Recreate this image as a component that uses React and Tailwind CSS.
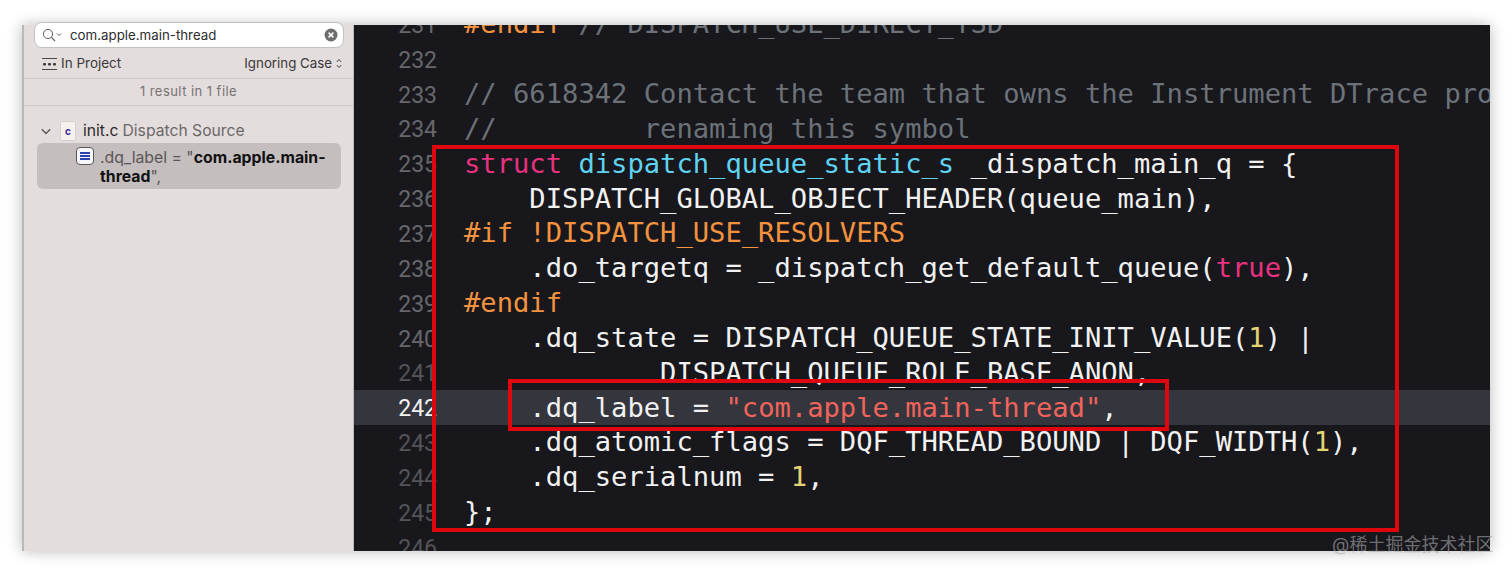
const P = "text-[#e8327f]", B = "text-[#5fd3ef]", O = "text-[#f3923f]", C = "text-[#6c7278]", S = "text-[#f0645c]", N = "text-[#e3d375]";

const lines = [
  [231, [["#endif", O], [" // DISPATCH_USE_DIRECT_TSD", C]]],
  [232, []],
  [233, [["// 6618342 Contact the team that owns the Instrument DTrace probe before", C]]],
  [234, [["//         renaming this symbol", C]]],
  [235, [["struct", P], [" "], ["dispatch_queue_static_s", B], [" _dispatch_main_q = {"]]],
  [236, [["    DISPATCH_GLOBAL_OBJECT_HEADER(queue_main),"]]],
  [237, [["#if !DISPATCH_USE_RESOLVERS", O]]],
  [238, [["    .do_targetq = _dispatch_get_default_queue("], ["true", P], ["),"]]],
  [239, [["#endif", O]]],
  [240, [["    .dq_state = DISPATCH_QUEUE_STATE_INIT_VALUE("], ["1", N], [") |"]]],
  [241, [["            DISPATCH_QUEUE_ROLE_BASE_ANON,"]]],
  [242, [["    .dq_label = "], ['"com.apple.main-thread"', S], [","]]],
  [243, [["    .dq_atomic_flags = DQF_THREAD_BOUND | DQF_WIDTH("], ["1", N], ["),"]]],
  [244, [["    .dq_serialnum = "], ["1", N], [","]]],
  [245, [["};"]]],
  [246, []],
];

function SearchIcon() {
  return (
    <svg width="20" height="14" viewBox="0 0 20 14" fill="none" stroke="#5f5c5d">
      <circle cx="6" cy="6" r="4.6" strokeWidth="1" />
      <path d="M9.4 9.4 13 13" strokeWidth="1.1" />
      <path d="M15 5.5l2 2 2-2" strokeWidth="1" />
    </svg>
  );
}

function ClearIcon() {
  return (
    <svg width="14" height="14" viewBox="0 0 14 14">
      <circle cx="7" cy="7" r="6.5" fill="#6f6c6d" />
      <path d="M4.6 4.6l4.8 4.8M9.4 4.6l-4.8 4.8" stroke="#fff" strokeWidth="1.5" />
    </svg>
  );
}

function ScopeIcon() {
  return (
    <svg width="16" height="14" viewBox="0 0 16 14" fill="#3a3839">
      <rect x="0" y="1" width="15" height="1" fill="#4a4849" />
      <rect x="0" y="12" width="15" height="1" fill="#4a4849" />
      <rect x="1" y="6" width="3" height="2.4" rx="1" />
      <rect x="6" y="6" width="3" height="2.4" rx="1" />
      <rect x="11" y="6" width="3" height="2.4" rx="1" />
    </svg>
  );
}

function UpDownIcon() {
  return (
    <svg width="6" height="11" viewBox="0 0 6 11" fill="none" stroke="#4a4849" strokeWidth="1">
      <path d="M.8 4 3 1.4 5.2 4M.8 7 3 9.6 5.2 7" />
    </svg>
  );
}

function Chevron() {
  return (
    <svg width="10" height="7" viewBox="0 0 10 7" fill="none" stroke="#5a5758" strokeWidth="1.4">
      <path d="M.8 1.2 5 5.4l4.2-4.2" />
    </svg>
  );
}

function FileIcon() {
  return (
    <div className="relative flex h-[18px] w-[14px] items-center justify-center bg-[#f5f2ee] shadow-[0_0_1px_rgba(0,0,0,0.35)]">
      <span className="text-[10px] font-bold leading-none text-[#3c2a9a]">c</span>
    </div>
  );
}

function RowIcon() {
  return (
    <div className="flex h-[18px] w-[18px] flex-col justify-center gap-[1px] rounded-[4px] border border-[#55565c] bg-[#f7f7f9] px-[3px]">
      <div className="h-[2px] bg-[#2a3fb0]" />
      <div className="h-[2px] bg-[#2a3fb0]" />
      <div className="h-[2px] bg-[#2a3fb0]" />
    </div>
  );
}

function Sidebar() {
  return (
    <aside className="flex w-[330px] shrink-0 flex-col border-r border-[#bdb9ba] bg-[#e3dddd] font-['Inter',sans-serif]">
      <div className="ml-[10px] mr-[9px] mt-[-3px] flex h-[26px] items-center rounded-[8px] border border-[#c4c0c0] bg-white pl-[7px] pr-[5px]">
        <SearchIcon />
        <span className="ml-[8px] flex-1 pt-[1px] text-[13.3px] text-[#2e2c2d]">com.apple.main-thread</span>
        <ClearIcon />
      </div>
      <div className="flex h-[30px] items-center justify-between pl-[18px] pr-[11px] pt-[1px] text-[13.5px] text-[#3a3839]">
        <div className="flex items-center gap-[3px]">
          <ScopeIcon />
          <span>In Project</span>
        </div>
        <div className="flex items-center gap-[4px]">
          <span className="text-[13.3px]">Ignoring Case</span>
          <UpDownIcon />
        </div>
      </div>
      <div className="flex h-[28px] items-center justify-center border-y border-[#cfcaca] text-[13px] tracking-[0.45px] text-[#777374]">
        1 result in 1 file
      </div>
      <div className="flex h-[37px] items-center pl-[17px] pt-[13px] text-[15.7px]">
        <Chevron />
        <div className="ml-[10px]"><FileIcon /></div>
        <span className="ml-[8px] text-[#2b292a]">init.c</span>
        <span className="ml-[4px] text-[#6b6768]">Dispatch Source</span>
      </div>
      <div className="ml-[13px] mr-[12px] flex h-[46px] rounded-[6px] bg-[#c4bebf] pl-[39px] pr-[10px] pt-[4px]">
        <div className="shrink-0"><RowIcon /></div>
        <p className="ml-[6px] pt-[1px] text-[15.8px] leading-[19px] text-[#5a5657]">
          .dq_label = "<b className="font-bold text-[#111]">com.apple.main-thread</b>",
        </p>
      </div>
    </aside>
  );
}

function Editor() {
  return (
    <main className="relative min-w-0 flex-1 overflow-hidden bg-[#17171c]">
      <div className="mt-[-18.5px]">
        {lines.map(([n, tokens]) => (
          <div key={n} className={`flex h-[34.85px] items-center ${n === 242 ? "bg-[#34353d]" : ""}`}>
            <span
              className={`w-[83px] shrink-0 pt-[3px] text-right font-['Roboto',sans-serif] text-[23px] leading-none ${
                n === 242 ? "text-[#f2f2f2]" : n > 240 ? "text-[#545457]" : "text-[#67676b]"
              }`}
            >
              {n}
            </span>
            <code className="ml-[27px] whitespace-pre font-['DejaVu_Sans_Mono',monospace] text-[27.15px] leading-none text-[#f1f1f1]">
              {tokens.map(([t, c], i) => (
                <span key={i} className={c}>{t}</span>
              ))}
            </code>
          </div>
        ))}
      </div>
    </main>
  );
}

export default function App() {
  return (
    <div className="relative h-[573px] w-[1512px] overflow-hidden bg-white px-[22px] pb-[22px] pt-[25px]">
      <div className="flex h-[526px] w-[1468px] border-l-[2px] border-[#bcb8b8] shadow-[0_0_14px_rgba(0,0,0,0.28)]">
        <Sidebar />
        <Editor />
      </div>
      <div className="absolute left-[432px] top-[145px] h-[387px] w-[967px] border-[4px] border-[#e0060e]" />
      <div className="absolute left-[508px] top-[379px] h-[52px] w-[661px] border-[4px] border-[#e0060e]" />
      <div className="absolute left-[1332px] top-[532px] whitespace-nowrap font-['Inter','Noto_Sans_CJK_SC',sans-serif] text-[18px] leading-[26px] text-[rgba(170,170,170,0.62)]">
        @稀土掘金技术社区
      </div>
    </div>
  );
}
